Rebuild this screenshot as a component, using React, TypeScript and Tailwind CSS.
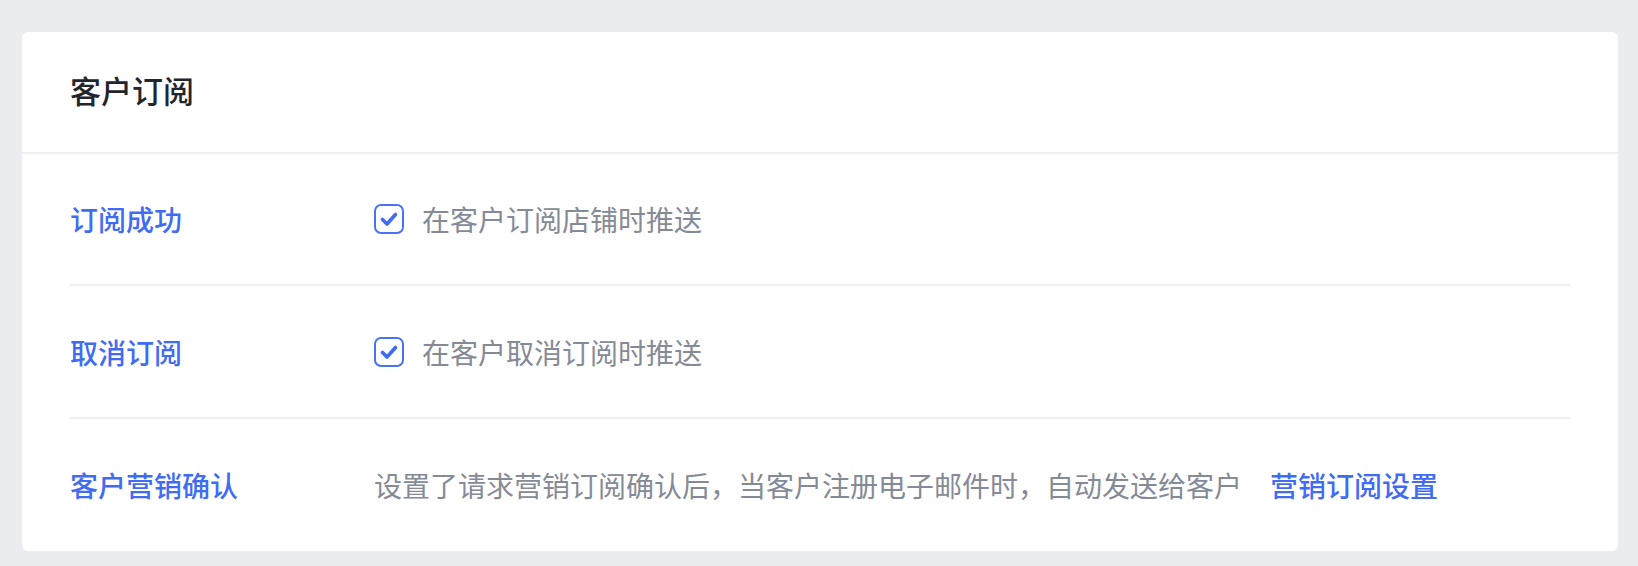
import type { FC, ReactNode } from 'react';

const font = { fontFamily: '"Noto Sans CJK SC", "Noto Sans", sans-serif' };

const Checkbox: FC = () => (
  <span className="w-[30px] h-[30px] shrink-0 rounded-[7px] border-[2.5px] border-[#4a72f5] flex items-center justify-center">
    <svg width="20" height="20" viewBox="0 0 20 20" fill="none">
      <path d="M3.5 10.5 L8 15 L16.5 5.5" stroke="#3f6cf2" strokeWidth="3.6" strokeLinecap="round" strokeLinejoin="round" />
    </svg>
  </span>
);

interface RowProps {
  label: string;
  children: ReactNode;
  className: string;
}

const Row: FC<RowProps> = ({ label, children, className }) => (
  <div className={`flex items-center ${className}`}>
    <div className="w-[304px] shrink-0 text-[28px] font-medium text-[#3f6cf2]">{label}</div>
    <div className="flex items-center">{children}</div>
  </div>
);

const App: FC = () => {
  return (
    <div className="w-[1638px] h-[566px] bg-[#ebecef] pt-8 pl-[22px] pr-5" style={font}>
      <div className="bg-white rounded-[6px] h-[519px] flex flex-col">
        {/* Header */}
        <div className="h-[122px] shrink-0 flex items-center px-12 border-b-2 border-[#eef0f3]">
          <h2 className="text-[31px] font-medium text-[#22252c] -mt-1">客户订阅</h2>
        </div>

        {/* Rows */}
        <div className="mx-12 flex-1 flex flex-col">
          <Row label="订阅成功" className="h-[132px] border-b-2 border-[#eef0f3]">
            <Checkbox />
            <span className="ml-[18px] text-[28px] text-[#858a97]">在客户订阅店铺时推送</span>
          </Row>
          <Row label="取消订阅" className="h-[133px] border-b-2 border-[#eef0f3]">
            <Checkbox />
            <span className="ml-[18px] text-[28px] text-[#858a97]">在客户取消订阅时推送</span>
          </Row>
          <Row label="客户营销确认" className="flex-1">
            <span className="text-[28px] text-[#858a97]">设置了请求营销订阅确认后，当客户注册电子邮件时，自动发送给客户</span>
            <a className="ml-7 text-[28px] font-medium text-[#3f6cf2] cursor-pointer">营销订阅设置</a>
          </Row>
        </div>
      </div>
    </div>
  );
};

export default App;
